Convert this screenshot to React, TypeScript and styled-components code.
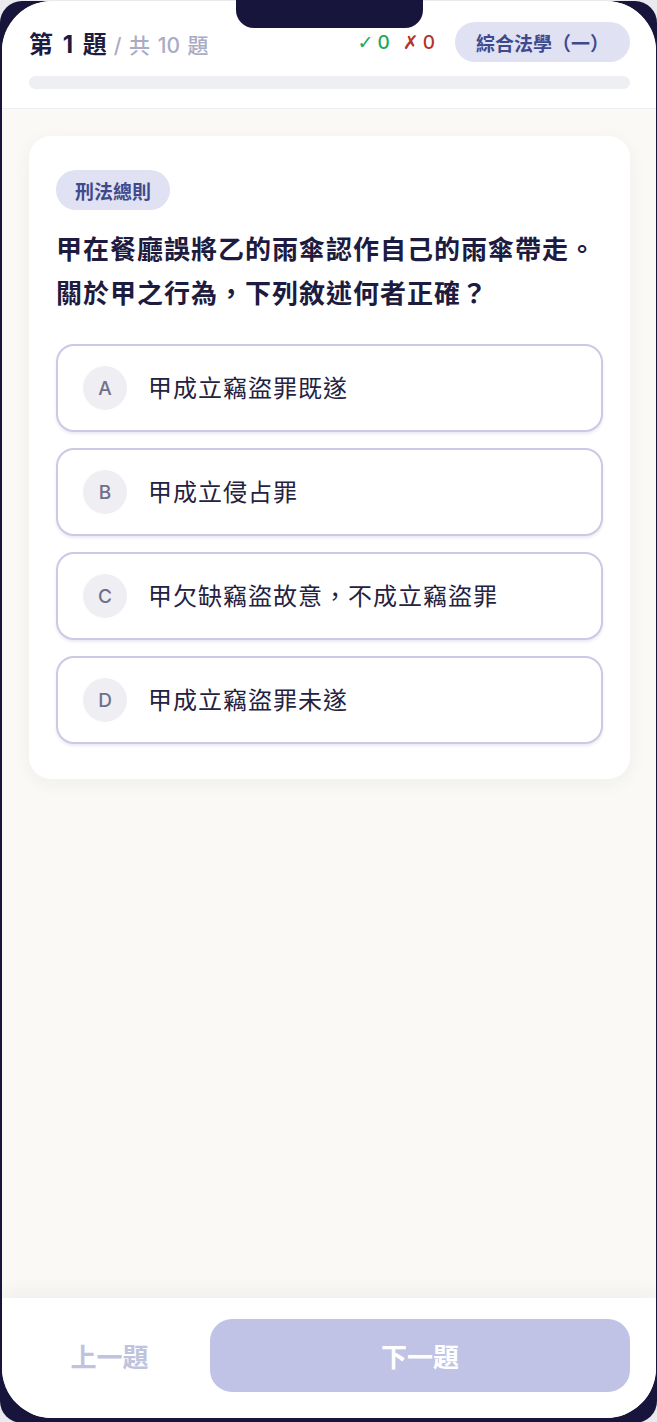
import React from "react";
import styled, { createGlobalStyle } from "styled-components";

const GlobalStyle = createGlobalStyle`
  html, body {
    margin: 0;
    padding: 0;
    background: #e9e9ee;
    overflow: hidden;
  }
  body {
    font-family: Inter, "Noto Sans CJK TC", "Noto Sans", sans-serif;
    -webkit-font-smoothing: antialiased;
  }
  * { box-sizing: border-box; }
`;

const Frame = styled.div`
  position: relative;
  width: 657px;
  height: 1422px;
  margin-top: 1px;
  background: #17153b;
  border-radius: 22px;
  padding: 0 1px 5px 2px;
`;

const Notch = styled.div`
  position: absolute;
  top: -1px;
  left: 236px;
  width: 187px;
  height: 28px;
  background: #17153b;
  border-radius: 0 0 18px 18px;
  z-index: 5;
`;

const Screen = styled.div`
  height: 100%;
  border-radius: 50px;
  overflow: hidden;
  background: #faf9f6;
  display: flex;
  flex-direction: column;
`;

const Header = styled.header`
  background: #fff;
  padding: 21px 26px 19px 27px;
  border-bottom: 1px solid #eeedf0;
  display: flex;
  flex-direction: column;
  gap: 14px;
`;

const TopRow = styled.div`
  display: flex;
  align-items: center;
  justify-content: space-between;
  height: 40px;
`;

const Title = styled.div`
  display: flex;
  align-items: baseline;
  gap: 7px;
`;

const Current = styled.span`
  font-size: 24px;
  font-weight: 700;
  color: #1d1b40;
  word-spacing: 4px;
`;

const Total = styled.span`
  font-size: 21px;
  font-weight: 500;
  color: #aaabc4;
  word-spacing: 2px;
`;

const RightGroup = styled.div`
  display: flex;
  align-items: center;
  gap: 20px;
`;

const Scores = styled.div`
  display: flex;
  align-items: center;
  gap: 13px;
`;

const Score = styled.span<{ $tone: "ok" | "bad" }>`
  font-size: 19px;
  font-weight: 500;
  color: ${(p) => (p.$tone === "ok" ? "#22a85a" : "#b5332a")};
  display: inline-flex;
  align-items: center;
  gap: 4px;
`;

const Mark = styled.span`
  font-family: "DejaVu Sans", sans-serif;
  font-size: 19px;
  font-weight: 700;
`;

const Pill = styled.span`
  display: inline-flex;
  align-items: center;
  height: 40px;
  padding: 0 21px;
  border-radius: 20px;
  background: #e0e1f3;
  color: #3e4a8c;
  font-size: 19px;
  font-weight: 600;
`;

const Progress = styled.div`
  height: 13px;
  border-radius: 7px;
  background: #eeeff3;
  overflow: hidden;
`;

const Main = styled.main`
  flex: 1;
  padding: 27px 26px 0 27px;
`;

const Card = styled.section`
  background: #fff;
  border-radius: 22px;
  padding: 34px 27px 35px 27px;
  box-shadow: 0 4px 18px rgba(40, 30, 20, 0.05);
`;

const Tag = styled.span`
  display: inline-flex;
  align-items: center;
  height: 40px;
  padding: 0 19px;
  border-radius: 20px;
  background: #e0e1f3;
  color: #3e4a8c;
  font-size: 19px;
  font-weight: 600;
`;

const Question = styled.h2`
  margin: 18px 0 28px;
  font-size: 26px;
  line-height: 44px;
  font-weight: 700;
  color: #1d1b40;
  letter-spacing: 1px;
`;

const Options = styled.div`
  display: flex;
  flex-direction: column;
  gap: 16px;
`;

const Option = styled.button`
  display: flex;
  align-items: center;
  gap: 21px;
  height: 88px;
  padding: 0 24px 0 25px;
  border: 2px solid #cdc9e4;
  border-radius: 18px;
  background: #fff;
  box-shadow: 0 2px 3px rgba(110, 100, 170, 0.14);
  font-family: inherit;
  text-align: left;
  cursor: pointer;
`;

const Letter = styled.span`
  flex: none;
  width: 44px;
  height: 44px;
  border-radius: 50%;
  background: #eeeef3;
  color: #6e7089;
  font-size: 19px;
  font-weight: 500;
  display: flex;
  align-items: center;
  justify-content: center;
`;

const OptionText = styled.span`
  font-size: 24px;
  font-weight: 400;
  color: #24223f;
  letter-spacing: 1px;
  margin-top: -3px;
`;

const BottomBar = styled.footer`
  background: #fff;
  padding: 21px 26px 26px 27px;
  display: flex;
  gap: 20px;
  box-shadow: 0 -6px 18px rgba(40, 30, 20, 0.05);
  position: relative;
`;

const NavButton = styled.button<{ $primary?: boolean }>`
  height: 73px;
  border: none;
  border-radius: 22px;
  font-family: inherit;
  font-size: 26px;
  font-weight: 700;
  cursor: pointer;
  ${(p) =>
    p.$primary
      ? `flex: 1; background: #c0c3e6; color: #ffffff;`
      : `width: 161px; background: transparent; color: #bfc3de;`}
`;

const options = [
  { key: "A", text: "甲成立竊盜罪既遂" },
  { key: "B", text: "甲成立侵占罪" },
  { key: "C", text: "甲欠缺竊盜故意，不成立竊盜罪" },
  { key: "D", text: "甲成立竊盜罪未遂" },
];

export default function App() {
  return (
    <>
      <GlobalStyle />
      <Frame>
        <Notch />
        <Screen>
          <Header>
            <TopRow>
              <Title>
                <Current>第 1 題</Current>
                <Total>/ 共 10 題</Total>
              </Title>
              <RightGroup>
                <Scores>
                  <Score $tone="ok">
                    <Mark>✓</Mark>0
                  </Score>
                  <Score $tone="bad">
                    <Mark>✗</Mark>0
                  </Score>
                </Scores>
                <Pill>綜合法學（一）</Pill>
              </RightGroup>
            </TopRow>
            <Progress />
          </Header>
          <Main>
            <Card>
              <Tag>刑法總則</Tag>
              <Question>
                甲在餐廳誤將乙的雨傘認作自己的雨傘帶走。關於甲之行為，下列敘述何者正確？
              </Question>
              <Options>
                {options.map((o) => (
                  <Option key={o.key}>
                    <Letter>{o.key}</Letter>
                    <OptionText>{o.text}</OptionText>
                  </Option>
                ))}
              </Options>
            </Card>
          </Main>
          <BottomBar>
            <NavButton>上一題</NavButton>
            <NavButton $primary>下一題</NavButton>
          </BottomBar>
        </Screen>
      </Frame>
    </>
  );
}
